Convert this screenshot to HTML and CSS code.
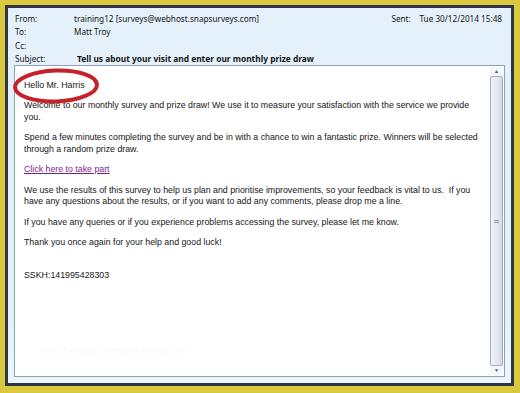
FILE: index.html
```html
<!DOCTYPE html>
<html lang="en">
  <head>
    <meta charset="UTF-8" />
    <meta name="viewport" content="width=device-width, initial-scale=1.0" />
    <title>Tell us about your visit and enter our monthly prize draw</title>
    <link rel="stylesheet" href="styles.css">
  </head>
  <body>
    <div class="frame">
      <div class="window">
        <div class="header">
          <div class="row">
            <span class="label">From:</span>
            <span class="value">training12 [surveys@webhost.snapsurveys.com]</span>
            <span class="sent">
              <span class="sent-label">Sent:</span>
              <span>Tue 30/12/2014 15:48</span>
            </span>
          </div>
          <div class="row">
            <span class="label">To:</span>
            <span class="value">Matt Troy</span>
          </div>
          <div class="row">
            <span class="label">Cc:</span>
            <span class="value"></span>
          </div>
          <div class="row">
            <span class="label">Subject:</span>
            <span class="value subject">Tell us about your visit and enter our monthly prize draw</span>
          </div>
        </div>

        <div class="message">
          <div class="content">
            <p>Hello Mr. Harris</p>
            <p>Welcome to our monthly survey and prize draw! We use it to measure your satisfaction with the service we provide you.</p>
            <p>Spend a few minutes completing the survey and be in with a chance to win a fantastic prize. Winners will be selected through a random prize draw.</p>
            <p><a href="#">Click here to take part</a></p>
            <p>We use the results of this survey to help us plan and prioritise improvements, so your feedback is vital to us.&nbsp; If you have any questions about the results, or if you want to add any comments, please drop me a line.</p>
            <p>If you have any queries or if you experience problems accessing the survey, please let me know.</p>
            <p>Thank you once again for your help and good luck!</p>
            <p class="code">SSKH:141995428303</p>
            <div class="watermark">www.heritagechristiancollege.com</div>
          </div>

          <div class="scrollbar">
            <div class="arrow">&#9650;</div>
            <div class="thumb"><span class="grip"></span></div>
            <div class="arrow">&#9660;</div>
          </div>

          <!-- red ring round the greeting -->
          <svg class="circle" width="96" height="40" viewBox="0 0 96 40">
            <ellipse cx="48" cy="20" rx="41" ry="15.5" transform="rotate(-2 48 20)" fill="none" stroke="#c4232c" stroke-width="4" />
          </svg>
        </div>
      </div>
    </div>
  </body>
</html>
```

FILE: styles.css
```css
* {
  margin: 0;
  padding: 0;
  box-sizing: border-box;
}

body {
  width: 520px;
  height: 393px;
  background: #dac93e;
  font-family: "Liberation Sans", Arial, sans-serif;
  overflow: hidden;
}

.frame {
  height: 100%;
  padding: 5px 6px 7px 5px;
}

.window {
  height: 100%;
  border: 3px solid #2e3646;
  background: linear-gradient(to bottom, #e4f1fb 85%, #eef6fd);
  display: flex;
  flex-direction: column;
}

.header {
  height: 57px;
  padding: 3.5px 9px 0 7px;
  font-family: "Noto Sans", sans-serif;
  font-size: 8.2px;
  color: #151515;
}

.header .row {
  display: flex;
  height: 13.5px;
  line-height: 13.5px;
}

.header .label {
  width: 59px;
}

.header .subject {
  padding-left: 3px;
  font-weight: bold;
  font-size: 8.4px;
}

.header .sent {
  margin-left: auto;
  display: flex;
}

.header .sent-label {
  width: 28px;
}

.message {
  position: relative;
  flex: 1;
  margin: 0 6px 6px 6px;
  border: 1px solid #8ea2b6;
  background: #fff;
  display: flex;
}

.content {
  flex: 1;
  padding: 13.5px 12px 0 9px;
  font-size: 8.8px;
  line-height: 11.5px;
  color: #161616;
}

.content p {
  margin-bottom: 9px;
}

.content a {
  color: #7b1f86;
}

.content .code {
  margin-top: 21px;
}

.watermark {
  margin-top: 63.5px;
  margin-left: 16px;
  font-size: 10px;
  color: #f9f9f9;
}

.scrollbar {
  width: 13px;
  margin: 1px 1px 1px 0;
  display: flex;
  flex-direction: column;
  background: #f4f6f9;
}

.scrollbar .arrow {
  height: 9px;
  font-size: 5px;
  line-height: 9px;
  text-align: center;
  color: #4d5561;
}

.scrollbar .thumb {
  flex: 1;
  border: 1px solid #a3adbb;
  border-radius: 2px;
  background: linear-gradient(to right, #f0f3f8, #e2e8f2 60%, #d3dbe8);
  display: flex;
  align-items: center;
  justify-content: center;
}

.scrollbar .grip {
  width: 5px;
  height: 3px;
  border-top: 1px solid #8a94a3;
  border-bottom: 1px solid #8a94a3;
}

.circle {
  position: absolute;
  left: -7.5px;
  top: -0.5px;
}
```
